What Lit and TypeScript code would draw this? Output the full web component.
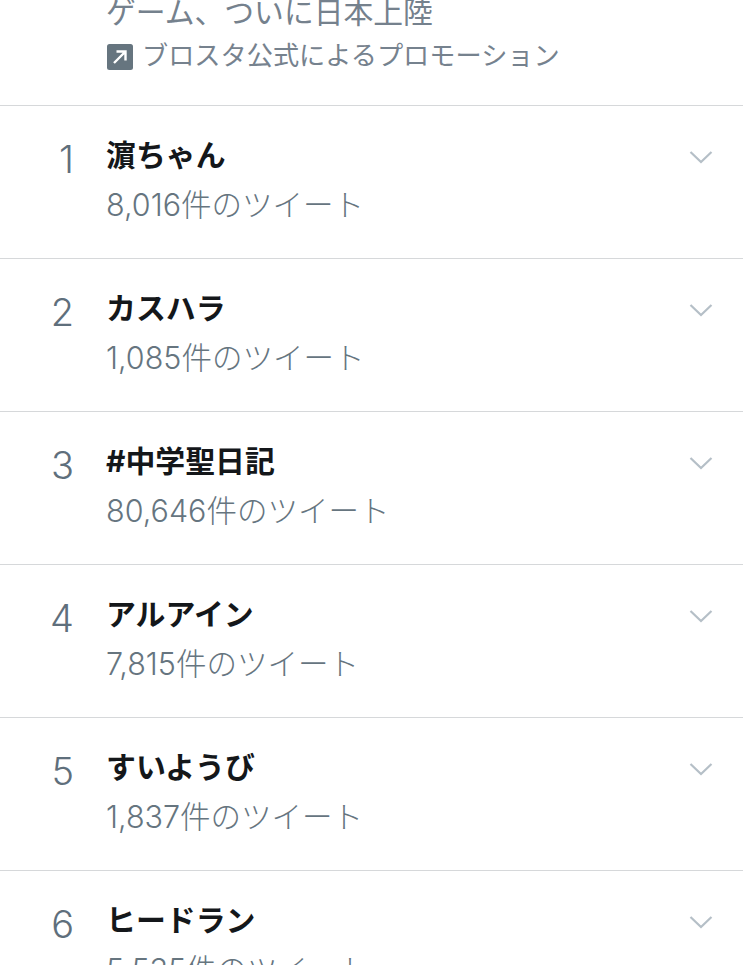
import { LitElement, html, css, svg } from "lit";
import { customElement } from "lit/decorators.js";

const rows = [
  ["1", "濵ちゃん", "8,016件のツイート"],
  ["2", "カスハラ", "1,085件のツイート"],
  ["3", "#中学聖日記", "80,646件のツイート"],
  ["4", "アルアイン", "7,815件のツイート"],
  ["5", "すいようび", "1,837件のツイート"],
  ["6", "ヒードラン", "5,535件のツイート"],
];

@customElement("app-root")
export class AppRoot extends LitElement {
  static styles = css`
    :host {
      display: block;
      width: 743px;
      height: 965px;
      overflow: hidden;
      background: #fff;
      font-family: Inter, "Noto Sans CJK JP", sans-serif;
      color: #6f7d8a;
    }
    .promo {
      height: 105px;
      box-sizing: border-box;
      padding: 0 0 38px 106px;
      display: flex;
      flex-direction: column;
      justify-content: flex-end;
      overflow: hidden;
    }
    .headline {
      flex: none;
      font-size: 29.8px;
      line-height: 40px;
      margin-bottom: 9px;
      color: #75818d;
      white-space: nowrap;
    }
    .by {
      flex: none;
      display: flex;
      align-items: center;
      gap: 9px;
      height: 26px;
      font-size: 26.2px;
      color: #76828e;
      white-space: nowrap;
    }
    .ico { flex: none; width: 26px; height: 26px; display: block; margin: 6px 0 0 1px; }
    .row {
      height: 153px;
      box-sizing: border-box;
      border-top: 1px solid #d6d8da;
      display: flex;
      align-items: flex-start;
    }
    .num {
      flex: none;
      width: 74px;
      margin-top: 31px;
      text-align: right;
      font-size: 38px;
      line-height: 44px;
      font-weight: 300;
      color: #5f6f7c;
    }
    .body { flex: 1; margin-left: 32px; margin-top: 29px; }
    .name {
      font-size: 29.9px;
      line-height: 40px;
      font-weight: 700;
      color: #14171a;
      white-space: nowrap;
    }
    .sub {
      margin-top: 10px;
      font-size: 30.5px;
      line-height: 40px;
      font-weight: 300;
      color: #66757f;
      white-space: nowrap;
    }
    .chev { flex: none; width: 24px; height: 14px; margin: 44px 30px 0 0; display: block; }
  `;

  render() {
    return html`
      <div class="promo">
        <div class="headline">ゲーム、ついに日本上陸</div>
        <div class="by">
          <svg class="ico" viewBox="0 0 26 26">
            <rect width="26" height="26" rx="2.5" fill="#66757f"></rect>
            <path d="M7 19 L18 8 M9.5 7.5 H18.5 V16.5" fill="none" stroke="#fff" stroke-width="2.4"></path>
          </svg>
          <span>ブロスタ公式によるプロモーション</span>
        </div>
      </div>
      ${rows.map(
        ([n, name, sub]) => html`
          <div class="row">
            <div class="num">${n}</div>
            <div class="body">
              <div class="name">${name}</div>
              <div class="sub">${sub}</div>
            </div>
            <svg class="chev" viewBox="0 0 24 14">
              ${svg`<path d="M1.5 2 L12 12 L22.5 2" fill="none" stroke="#b5bfc7" stroke-width="2.2"></path>`}
            </svg>
          </div>
        `
      )}
    `;
  }
}
